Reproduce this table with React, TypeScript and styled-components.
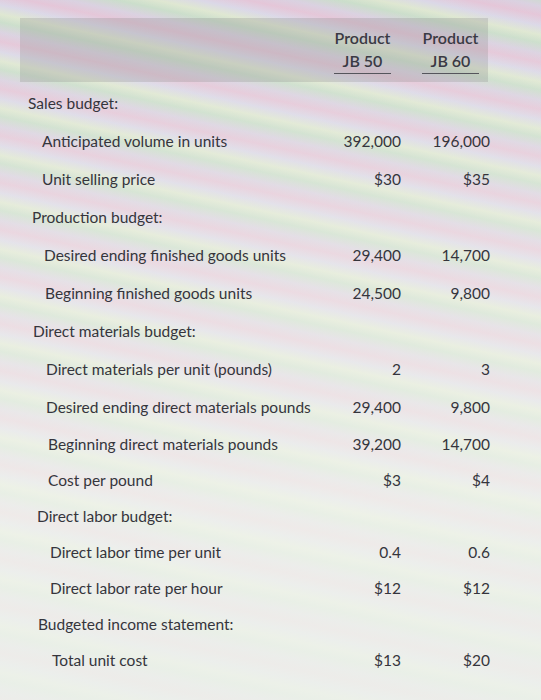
import React from "react";
import styled, { createGlobalStyle } from "styled-components";

const GlobalStyle = createGlobalStyle`
  html, body {
    margin: 0;
    padding: 0;
  }
  body {
    font-family: Lato, "Open Sans", "Liberation Sans", sans-serif;
    color: #35353c;
  }
`;

type Row = {
  label: string;
  x: number;
  a?: string;
  b?: string;
};

const rows: Row[] = [
  { label: "Sales budget:", x: 28 },
  { label: "Anticipated volume in units", x: 42, a: "392,000", b: "196,000" },
  { label: "Unit selling price", x: 42, a: "$30", b: "$35" },
  { label: "Production budget:", x: 32 },
  { label: "Desired ending finished goods units", x: 44, a: "29,400", b: "14,700" },
  { label: "Beginning finished goods units", x: 45, a: "24,500", b: "9,800" },
  { label: "Direct materials budget:", x: 33 },
  { label: "Direct materials per unit (pounds)", x: 46, a: "2", b: "3" },
  { label: "Desired ending direct materials pounds", x: 46, a: "29,400", b: "9,800" },
  { label: "Beginning direct materials pounds", x: 48, a: "39,200", b: "14,700" },
  { label: "Cost per pound", x: 48, a: "$3", b: "$4" },
  { label: "Direct labor budget:", x: 37 },
  { label: "Direct labor time per unit", x: 50, a: "0.4", b: "0.6" },
  { label: "Direct labor rate per hour", x: 50, a: "$12", b: "$12" },
  { label: "Budgeted income statement:", x: 38 },
  { label: "Total unit cost", x: 52, a: "$13", b: "$20" },
];

const Page = styled.div`
  width: 541px;
  height: 700px;
  box-sizing: border-box;
  padding-top: 18px;
  overflow: hidden;
  background:
    linear-gradient(
      180deg,
      rgba(255, 255, 255, 0.05) 0%,
      rgba(246, 247, 240, 0.45) 40%,
      rgba(242, 245, 238, 0.78) 72%,
      rgba(238, 242, 236, 0.88) 100%
    ),
    repeating-linear-gradient(
      12deg,
      #e3c3d6 0px,
      #d8cfdf 9px,
      #c8dcc8 19px,
      #dde6cf 27px,
      #d9d6e6 36px,
      #e3c3d6 46px
    );
`;

const HeaderBand = styled.div`
  margin-left: 20px;
  width: 468px;
  height: 64px;
  box-sizing: border-box;
  padding-right: 9px;
  display: flex;
  justify-content: flex-end;
  align-items: flex-end;
  gap: 31px;
  background: rgba(135, 135, 135, 0.26);
`;

const HeaderCell = styled.div`
  width: 57px;
  margin-bottom: 8px;
  padding-bottom: 1px;
  border-bottom: 1px solid #55555c;
  text-align: center;
  font-size: 16px;
  font-weight: 600;
  line-height: 23px;
  color: #3a3a44;
  white-space: nowrap;
`;

const Table = styled.div`
  display: flex;
  flex-direction: column;
  margin-top: 2px;
`;

const Line = styled.div<{ $compact: boolean }>`
  display: flex;
  align-items: center;
  height: ${(p) => (p.$compact ? 36 : 38)}px;
  padding-right: 51px;
  font-size: 15.5px;
`;

const Label = styled.div<{ $x: number }>`
  flex: 1;
  padding-left: ${(p) => p.$x}px;
  white-space: nowrap;
`;

const Value = styled.div<{ $w: number }>`
  width: ${(p) => p.$w}px;
  text-align: right;
`;

export default function App() {
  return (
    <>
      <GlobalStyle />
      <Page>
        <HeaderBand>
          <HeaderCell>
            Product
            <br />
            JB 50
          </HeaderCell>
          <HeaderCell>
            Product
            <br />
            JB 60
          </HeaderCell>
        </HeaderBand>
        <Table>
          {rows.map((r, i) => (
            <Line key={r.label} $compact={i >= 9}>
              <Label $x={r.x}>{r.label}</Label>
              <Value $w={80}>{r.a}</Value>
              <Value $w={89}>{r.b}</Value>
            </Line>
          ))}
        </Table>
      </Page>
    </>
  );
}
